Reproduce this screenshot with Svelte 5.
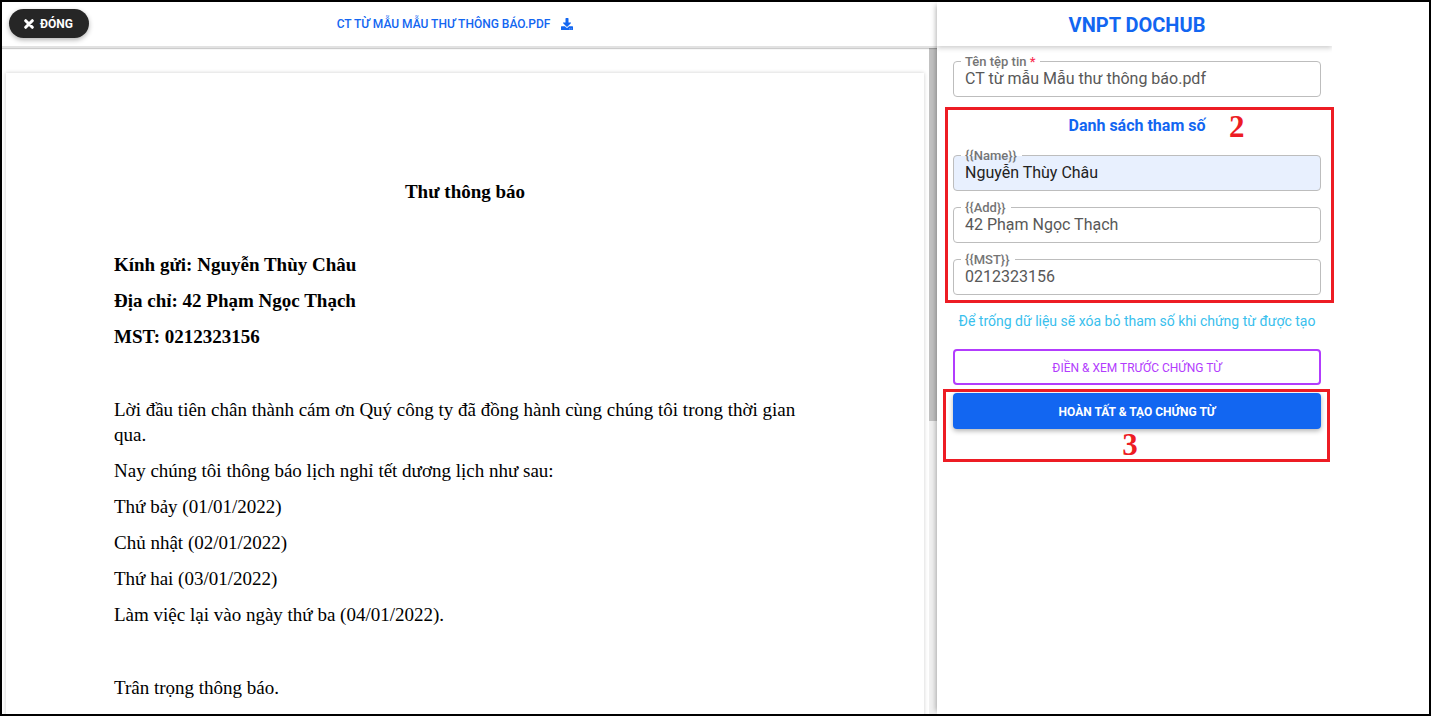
<script>
  let fileName = $state('CT từ mẫu Mẫu thư thông báo.pdf');
  let params = $state([
    { key: 'Name', value: 'Nguyễn Thùy Châu', filled: true },
    { key: 'Add', value: '42 Phạm Ngọc Thạch', filled: false },
    { key: 'MST', value: '0212323156', filled: false }
  ]);

  const paragraphs = [
    { text: 'Kính gửi: Nguyễn Thùy Châu', bold: true },
    { text: 'Địa chỉ: 42 Phạm Ngọc Thạch', bold: true },
    { text: 'MST: 0212323156', bold: true },
    { text: '' },
    { text: 'Lời đầu tiên chân thành cám ơn Quý công ty đã đồng hành cùng chúng tôi trong thời gian qua.' },
    { text: 'Nay chúng tôi thông báo lịch nghỉ tết dương lịch như sau:' },
    { text: 'Thứ bảy (01/01/2022)' },
    { text: 'Chủ nhật (02/01/2022)' },
    { text: 'Thứ hai (03/01/2022)' },
    { text: 'Làm việc lại vào ngày thứ ba (04/01/2022).' },
    { text: '' },
    { text: 'Trân trọng thông báo.' }
  ];
</script>

<div class="frame">
  <main class="viewer">
    <header class="toolbar">
      <button class="close" type="button">
        <svg width="10" height="10" viewBox="0 0 10 10" aria-hidden="true">
          <path d="M1.700 1.700 8.300 8.300M8.300 1.700 1.700 8.300" stroke="currentColor" stroke-width="3" stroke-linecap="round" />
        </svg>
        ĐÓNG
      </button>
      <a class="download" href="#download">
        CT TỪ MẪU MẪU THƯ THÔNG BÁO.PDF
        <svg width="12" height="12" viewBox="0 0 512 512" aria-hidden="true">
          <path
            fill="currentColor"
            d="M216 0h80c13.300 0 24 10.700 24 24v168h87.700c17.800 0 26.700 21.500 14.100 34.100L269.700 378.300c-7.500 7.500-19.800 7.500-27.300 0L90.100 226.100c-12.600-12.600-3.700-34.100 14.100-34.100H192V24c0-13.300 10.700-24 24-24zm296 376v112c0 13.300-10.700 24-24 24H24c-13.300 0-24-10.700-24-24V376c0-13.300 10.700-24 24-24h146.700l49 49c20.100 20.100 52.500 20.100 72.600 0l49-49H488c13.300 0 24 10.700 24 24zm-124 88c0-11-9-20-20-20s-20 9-20 20 9 20 20 20 20-9 20-20zm64 0c0-11-9-20-20-20s-20 9-20 20 9 20 20 20 20-9 20-20z"
          />
        </svg>
      </a>
    </header>
    <div class="stage">
      <div class="pages">
        <article class="page">
          <h1>Thư thông báo</h1>
          <p class="blank"></p>
          {#each paragraphs as p}
            <p class:bold={p.bold} class:blank={!p.text}>{p.text}</p>
          {/each}
        </article>
      </div>
      <div class="track"><div class="thumb"></div></div>
    </div>
  </main>

  <aside class="panel">
    <header class="brand"><h2>VNPT DOCHUB</h2></header>
    <form class="form">
      <div class="field">
        <input id="file-name" type="text" bind:value={fileName} />
        <label for="file-name">Tên tệp tin <span class="required">*</span></label>
      </div>

      <section class="params">
        <h3>Danh sách tham số</h3>
        {#each params as param}
          <div class="field">
            <input id={param.key} class:filled={param.filled} type="text" bind:value={param.value} />
            <label for={param.key}>{`{{${param.key}}}`}</label>
          </div>
        {/each}
        <div class="mark mark-params"></div>
        <span class="step step-params">2</span>
      </section>

      <p class="hint">Để trống dữ liệu sẽ xóa bỏ tham số khi chứng từ được tạo</p>
      <button class="action preview" type="button">ĐIỀN &amp; XEM TRƯỚC CHỨNG TỪ</button>
      <div class="finish">
        <button class="action submit" type="button">HOÀN TẤT &amp; TẠO CHỨNG TỪ</button>
        <div class="mark mark-finish"></div>
        <span class="step step-finish">3</span>
      </div>
    </form>
  </aside>
</div>

<style>
  :global(body) {
    background: #fff;
  }
  .frame,
  .frame * {
    box-sizing: border-box;
  }
  .frame {
    display: grid;
    grid-template-columns: 935fr 395fr 97fr;
    height: calc(100vh - 1px);
    border: 2px solid #000;
    overflow: hidden;
    font-family: Roboto, sans-serif;
    color: #4f4f4f;
  }
  h1,
  h2,
  h3,
  p {
    margin: 0;
  }
  .viewer {
    display: flex;
    flex-direction: column;
    min-width: 0;
    min-height: 0;
  }
  .toolbar {
    display: grid;
    grid-template-columns: 1fr auto 1fr;
    align-items: center;
    height: 46px;
    flex: none;
    padding: 0 36px 1px 7px;
    border-bottom: 2px solid #e2e2e2;
    box-shadow: 0 1px 1px rgba(0, 0, 0, 0.2);
    position: relative;
  }
  .close {
    display: flex;
    align-items: center;
    justify-content: center;
    justify-self: start;
    gap: 6px;
    width: 80px;
    height: 29px;
    padding: 1px 1px 0 0;
    border: 0;
    border-radius: 15px;
    background: #262626;
    color: #fff;
    font: 700 12px/16px Roboto, sans-serif;
    box-shadow: 0 2px 5px rgba(0, 0, 0, 0.3);
  }
  .download {
    display: flex;
    align-items: center;
    gap: 11px;
    padding-top: 1px;
    color: #1266f1;
    font-size: 12px;
    font-weight: 500;
    line-height: 16px;
    text-decoration: none;
    white-space: nowrap;
  }
  .stage {
    display: flex;
    flex: 1;
    min-height: 0;
  }
  .pages {
    flex: 1;
    min-width: 0;
    overflow: hidden;
    padding: 25px 5px 0 4px;
  }
  .page {
    min-height: 1200px;
    padding: 106px 108px;
    background: #fff;
    box-shadow: 0 0 4px rgba(0, 0, 0, 0.2);
    color: #000;
    font-family: 'Liberation Serif', serif;
    font-size: 19px;
    line-height: 25px;
  }
  .page h1 {
    margin-bottom: 11px;
    font-size: inherit;
    line-height: inherit;
    text-align: center;
  }
  .page p {
    margin-bottom: 11px;
  }
  .page .bold {
    font-weight: 700;
  }
  .page .blank {
    height: 26px;
  }
  .track {
    width: 8px;
    background: #f0f0f0;
  }
  .thumb {
    height: 56%;
    background: #c1c1c1;
  }
  .panel {
    position: relative;
    background: #fff;
    min-width: 0;
    box-shadow: -4px 0 5px -3px rgba(0, 0, 0, 0.3);
  }
  .brand {
    display: flex;
    align-items: center;
    justify-content: center;
    height: 44px;
    padding: 2px 0 0 5px;
    box-shadow: 0 2px 5px rgba(0, 0, 0, 0.2);
    clip-path: inset(0 0 -8px 0);
  }
  .brand h2 {
    color: #1266f1;
    font-size: 20px;
    font-weight: 700;
    line-height: 24px;
  }
  .form {
    padding: 15px 11px 0 16px;
  }
  .field {
    position: relative;
    margin-bottom: 16px;
  }
  .field input {
    display: block;
    width: 100%;
    height: 36px;
    padding: 0 11px 2px;
    border: 1px solid #bdbdbd;
    border-radius: 4px;
    background: #fff;
    color: #585858;
    font: 400 16px/24px Roboto, sans-serif;
  }
  .field .filled {
    background: #e8f0fe;
    color: #222;
  }
  .field label {
    position: absolute;
    top: -7px;
    left: 8px;
    padding: 0 5px 0 4px;
    background: linear-gradient(#fff 8px, transparent 8px);
    color: #757575;
    font-size: 13px;
    font-weight: 500;
    line-height: 16px;
  }
  .required {
    color: #f93154;
  }
  .params {
    position: relative;
  }
  .params h3 {
    padding: 1px 0 17px;
    color: #1266f1;
    font-size: 16px;
    font-weight: 700;
    line-height: 24px;
    text-align: center;
  }
  .mark {
    position: absolute;
    border: 3px solid #ed1c24;
    pointer-events: none;
  }
  .mark-params {
    inset: -6px -13px -8px -8px;
  }
  .mark-finish {
    inset: -4px -9px -33px -10px;
  }
  .step {
    position: absolute;
    color: #ed1c24;
    font: 700 31px/32px 'Liberation Serif', serif;
  }
  .step-params {
    top: -2px;
    left: 75%;
  }
  .step-finish {
    top: 36px;
    left: 46%;
  }
  .hint {
    padding-bottom: 18px;
    color: #39c0ed;
    font-size: 14px;
    line-height: 20px;
    text-align: center;
    white-space: nowrap;
  }
  .action {
    display: block;
    width: 100%;
    height: 36px;
    padding: 2px 0 0;
    border-radius: 4px;
    font: 500 12px/16px Roboto, sans-serif;
  }
  .preview {
    border: 2px solid #b23cfd;
    background: #fff;
    color: #b23cfd;
    font-weight: 400;
  }
  .finish {
    position: relative;
    margin-top: 8px;
  }
  .submit {
    border: 0;
    background: #1266f1;
    color: #fff;
    font-weight: 700;
    box-shadow: 0 2px 5px rgba(0, 0, 0, 0.3);
  }
</style>
